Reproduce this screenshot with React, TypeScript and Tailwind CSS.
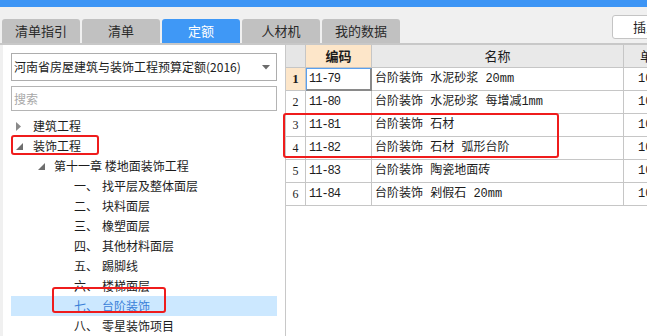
import React from "react";

const tabs = ["清单指引", "清单", "定额", "人材机", "我的数据"];

const sections = [
  { no: "一、", name: "找平层及整体面层" },
  { no: "二、", name: "块料面层" },
  { no: "三、", name: "橡塑面层" },
  { no: "四、", name: "其他材料面层" },
  { no: "五、", name: "踢脚线" },
  { no: "六、", name: "楼梯面层" },
  { no: "七、", name: "台阶装饰", selected: true },
  { no: "八、", name: "零星装饰项目" },
];

const rows = [
  { code: "11-79", name: "台阶装饰 水泥砂浆 20mm" },
  { code: "11-80", name: "台阶装饰 水泥砂浆 每增减1mm" },
  { code: "11-81", name: "台阶装饰 石材" },
  { code: "11-82", name: "台阶装饰 石材 弧形台阶" },
  { code: "11-83", name: "台阶装饰 陶瓷地面砖" },
  { code: "11-84", name: "台阶装饰 剁假石 20mm" },
];

const cjk = "font-['Noto_Sans_CJK_SC','Noto_Sans',sans-serif]";
const mono = "font-['Liberation_Mono','Noto_Sans_CJK_SC',monospace]";

function Collapsed() {
  return (
    <svg width="6" height="9" viewBox="0 0 6 9">
      <polygon points="0,0 5,4.5 0,9" fill="#8a8a8a" />
    </svg>
  );
}

function Expanded() {
  return (
    <svg width="7" height="7" viewBox="0 0 7 7">
      <polygon points="7,0 7,7 0,7" fill="#6e6e6e" />
    </svg>
  );
}

export default function App() {
  return (
    <div className={`relative w-[647px] h-[336px] overflow-hidden bg-[#f0f0f0] text-[#1c1c1c] ${cjk}`}>
      <div className="h-[7px] bg-[#3d95f5]" />

      {/* tab strip */}
      <div className="flex items-start h-[36px] pl-[2px]">
        <div className="flex gap-[2px] mt-[12px]">
          {tabs.map((t) => (
            <div
              key={t}
              className={`w-[78px] h-[24px] rounded-t-[3px] flex items-center justify-center text-[13px] ${
                t === "定额" ? "bg-[#3f98f6] text-white" : "bg-[#c1c1c1] text-[#2a2a2a]"
              }`}
            >
              {t}
            </div>
          ))}
        </div>
        <div className="ml-auto -mr-[25px] mt-[8px] w-[60px] h-[24px] bg-white border border-[#c4c4c4] rounded-[3px] text-[13px] pl-[20px] leading-[22px] whitespace-nowrap">
          插入
        </div>
      </div>
      <div className="h-[2px] bg-[#c8c8c8]" />

      <div className="flex h-[291px]">
        {/* left tree panel */}
        <div className="ml-[3px] w-[282px] bg-white pt-[8px] px-[8px]">
          <div className="h-[28px] border border-[#adadad] flex items-center pl-[2px] pr-[6px] text-[12px]">
            <span className="flex-1 whitespace-nowrap">河南省房屋建筑与装饰工程预算定额(2016)</span>
            <svg width="8" height="5" viewBox="0 0 8 5">
              <polygon points="0,0 8,0 4,4.5" fill="#6b6b6b" />
            </svg>
          </div>
          <div className="mt-[5px] h-[25px] border border-[#b4b4b4] flex items-center pl-[2px] text-[12px] text-[#a8a8a8]">
            搜索
          </div>
          <div className="mt-[5px] text-[12px]">
            <div className="h-[20px] flex items-center">
              <span className="w-[22px] pl-[5px] flex items-center"><Collapsed /></span>
              <span>建筑工程</span>
            </div>
            <div className="h-[20px] flex items-center">
              <span className="w-[22px] pl-[5px] flex items-center"><Expanded /></span>
              <span>装饰工程</span>
            </div>
            <div className="h-[20px] flex items-center">
              <span className="w-[43px] pl-[27px] flex items-center"><Expanded /></span>
              <span>第十一章 楼地面装饰工程</span>
            </div>
            {sections.map((s) => (
              <div
                key={s.no}
                className={`h-[20px] flex items-center ${s.selected ? "bg-[#cce8ff] text-[#3a80d8]" : ""}`}
              >
                <span className="w-[91px] pl-[63px]">{s.no}</span>
                <span>{s.name}</span>
              </div>
            ))}
          </div>
        </div>

        <div className="w-[1px] bg-[#c8c8c8]" />

        {/* right table panel */}
        <div className="flex-1 bg-white overflow-hidden">
          <div className="grid grid-cols-[20px_66px_252px_80px] text-[12px]">
            <div className="h-[23px] bg-[#e6e6e6] border-r border-b border-[#c6c6c6]" />
            <div className="h-[23px] bg-[#fde6c9] border-r border-b border-[#c6c6c6] flex items-center justify-center font-bold text-[13px]">
              编码
            </div>
            <div className="h-[23px] bg-[#e9e9e9] border-r border-b border-[#c6c6c6] flex items-center justify-center text-[13px]">
              名称
            </div>
            <div className="h-[23px] bg-[#e9e9e9] border-b border-[#c6c6c6] flex items-center pl-[16px] text-[13px]">
              单位
            </div>
            {rows.map((r, i) => (
              <React.Fragment key={r.code}>
                <div
                  className={`h-[23px] border-r border-b border-[#c6c6c6] flex items-center justify-center font-['Liberation_Serif',serif] ${
                    i === 0 ? "bg-[#fde6c9] font-bold text-[13px]" : "text-[12px]"
                  }`}
                >
                  {i + 1}
                </div>
                <div
                  className={`h-[23px] flex items-center pl-[2px] ${mono} tracking-[-1px] ${
                    i === 0
                      ? "border-l border-t border-[#5aa0ee] border-r-2 border-b-2 border-r-[#8a8a8a] border-b-[#8a8a8a]"
                      : "border-r border-b border-[#c6c6c6] pl-[3px]"
                  }`}
                >
                  {r.code}
                </div>
                <div className={`h-[23px] border-r border-b border-[#c6c6c6] flex items-center pl-[3px] whitespace-nowrap ${mono}`}>
                  {r.name}
                </div>
                <div className={`h-[23px] border-b border-[#c6c6c6] flex items-center pl-[14px] whitespace-nowrap ${mono}`}>
                  10m2
                </div>
              </React.Fragment>
            ))}
          </div>
        </div>
      </div>

      {/* red annotation boxes */}
      <div className="absolute left-[11px] top-[135px] w-[88px] h-[20px] border-2 border-[#ef1c1c] rounded-[3px]" />
      <div className="absolute left-[52px] top-[287px] w-[114px] h-[26px] border-2 border-[#ef1c1c] rounded-[3px]" />
      <div className="absolute left-[283px] top-[113px] w-[276px] h-[45px] border-2 border-[#ef1c1c] rounded-[3px]" />
    </div>
  );
}
